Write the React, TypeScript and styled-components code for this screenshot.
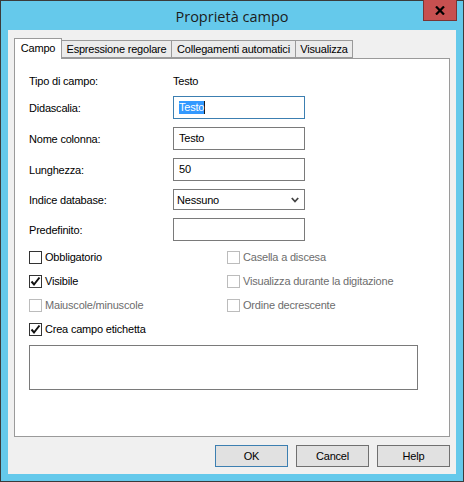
import React from 'react';
import styled, { createGlobalStyle } from 'styled-components';

const GlobalStyle = createGlobalStyle`
  html, body {
    margin: 0;
    padding: 0;
    background: #ffffff;
  }
  * {
    box-sizing: border-box;
  }
`;

const Window = styled.div`
  width: 464px;
  height: 482px;
  display: flex;
  flex-direction: column;
  background: #65c9eb;
  border: 1px solid #3b3b3b;
  padding: 0 7px 7px 7px;
  font-family: 'Liberation Sans', Arial, sans-serif;
  font-size: 11px;
  letter-spacing: -0.2px;
  color: #000;
  position: relative;
`;

const TitleBar = styled.div`
  height: 29px;
  display: flex;
  align-items: center;
  justify-content: center;
`;

const Title = styled.div`
  font-family: 'Open Sans', 'Noto Sans', sans-serif;
  font-size: 14.5px;
  letter-spacing: 0;
  color: #1c1c1c;
  margin-top: 1px;
`;

const CloseButton = styled.div`
  position: absolute;
  top: -1px;
  right: 6px;
  width: 34px;
  height: 21px;
  background: #c75050;
  border: 1px solid #7a3434;
  border-top: none;
  display: flex;
  align-items: center;
  justify-content: center;
`;

const Client = styled.div`
  flex: 1;
  background: #f0f0f0;
  padding: 8px 5px 0 6px;
  display: flex;
  flex-direction: column;
`;

const TabStrip = styled.div`
  display: flex;
  align-items: flex-end;
  height: 20px;
  position: relative;
  z-index: 1;
`;

const Tab = styled.div<{ $active?: boolean; $w: number }>`
  width: ${(p) => p.$w}px;
  height: ${(p) => (p.$active ? 21 : 18)}px;
  margin-bottom: ${(p) => (p.$active ? -1 : 0)}px;
  margin-left: ${(p) => (p.$active ? 0 : -1)}px;
  border: 1px solid #9a9a9a;
  border-bottom: ${(p) => (p.$active ? 'none' : '1px solid #9a9a9a')};
  background: ${(p) => (p.$active ? '#ffffff' : '#ebebeb')};
  display: flex;
  align-items: center;
  justify-content: center;
  padding-bottom: ${(p) => (p.$active ? 2 : 0)}px;
  white-space: nowrap;
  &:first-child {
    margin-left: 0;
  }
`;

const Panel = styled.div`
  width: 436px;
  height: 379px;
  background: #ffffff;
  border: 1px solid #9a9a9a;
  padding: 15px 14px 0 14px;
  display: flex;
  flex-direction: column;
  gap: 8px;
`;

const FieldRow = styled.div<{ $h: number }>`
  display: grid;
  grid-template-columns: 144px 132px;
  align-items: center;
  height: ${(p) => p.$h}px;
`;

const Label = styled.div`
  white-space: nowrap;
`;

const TextBox = styled.div<{ $focused?: boolean }>`
  height: 23px;
  border: 1px solid ${(p) => (p.$focused ? '#3c7fb1' : '#7a7a7a')};
  background: #fff;
  display: flex;
  align-items: center;
  padding: 0 0 1px 5px;
`;

const Selected = styled.span`
  background: #3399ff;
  color: #fff;
  border-right: 1px solid #1a1a1a;
  line-height: 13px;
`;

const SelectBox = styled.div`
  height: 21px;
  border: 1px solid #7a7a7a;
  background: #fff;
  display: flex;
  align-items: center;
  justify-content: space-between;
  padding: 0 5px 0 3px;
`;

const CheckGrid = styled.div`
  display: grid;
  grid-template-columns: 198px 1fr;
  grid-auto-rows: 16px;
  row-gap: 8px;
`;

const CheckItem = styled.div<{ $disabled?: boolean }>`
  display: flex;
  align-items: center;
  gap: 3px;
  color: ${(p) => (p.$disabled ? '#6d6d6d' : '#000')};
  white-space: nowrap;
`;

const Box = styled.div<{ $disabled?: boolean }>`
  width: 13px;
  height: 13px;
  border: 1px solid ${(p) => (p.$disabled ? '#bcbcbc' : '#333333')};
  background: #fff;
  display: flex;
  align-items: center;
  justify-content: center;
`;

const NoteBox = styled.div`
  width: 389px;
  height: 45px;
  border: 1px solid #7a7a7a;
  background: #fff;
`;

const ButtonRow = styled.div`
  display: flex;
  justify-content: flex-end;
  gap: 8px;
  margin-top: 8px;
  padding-right: 1px;
`;

const Button = styled.div<{ $default?: boolean }>`
  width: 73px;
  height: 22px;
  background: #e1e1e1;
  border: 1px solid ${(p) => (p.$default ? '#3c7fb1' : '#707070')};
  display: flex;
  align-items: center;
  justify-content: center;
`;

const Tick = () => (
  <svg width="11" height="11" viewBox="0 0 11 11">
    <path d="M1.5 5.5 L4 8.5 L9.5 1.5" fill="none" stroke="#111" strokeWidth="2" />
  </svg>
);

const Chevron = () => (
  <svg width="8" height="6" viewBox="0 0 8 6">
    <path d="M0.8 1 L4 4.5 L7.2 1" fill="none" stroke="#444" strokeWidth="1.8" />
  </svg>
);

const CloseGlyph = () => (
  <svg width="10" height="9" viewBox="0 0 10 9">
    <path d="M1 0.5 L9 8.5 M9 0.5 L1 8.5" stroke="#000" strokeWidth="2.2" />
  </svg>
);

const Check: React.FC<{ label: string; checked?: boolean; disabled?: boolean }> = ({
  label,
  checked,
  disabled,
}) => (
  <CheckItem $disabled={disabled}>
    <Box $disabled={disabled}>{checked && <Tick />}</Box>
    <span>{label}</span>
  </CheckItem>
);

const tabs = [
  { name: 'Campo', w: 48 },
  { name: 'Espressione regolare', w: 111 },
  { name: 'Collegamenti automatici', w: 125 },
  { name: 'Visualizza', w: 58 },
];

export default function App() {
  return (
    <>
      <GlobalStyle />
      <Window>
        <TitleBar>
          <Title>Proprietà campo</Title>
        </TitleBar>
        <CloseButton>
          <CloseGlyph />
        </CloseButton>
        <Client>
          <TabStrip>
            {tabs.map((t, i) => (
              <Tab key={t.name} $active={i === 0} $w={t.w}>
                {t.name}
              </Tab>
            ))}
          </TabStrip>
          <Panel>
            <FieldRow $h={14}>
              <Label>Tipo di campo:</Label>
              <Label>Testo</Label>
            </FieldRow>
            <FieldRow $h={23}>
              <Label>Didascalia:</Label>
              <TextBox $focused>
                <Selected>Testo</Selected>
              </TextBox>
            </FieldRow>
            <FieldRow $h={23}>
              <Label>Nome colonna:</Label>
              <TextBox>Testo</TextBox>
            </FieldRow>
            <FieldRow $h={23}>
              <Label>Lunghezza:</Label>
              <TextBox>50</TextBox>
            </FieldRow>
            <FieldRow $h={21}>
              <Label>Indice database:</Label>
              <SelectBox>
                <span>Nessuno</span>
                <Chevron />
              </SelectBox>
            </FieldRow>
            <FieldRow $h={23}>
              <Label>Predefinito:</Label>
              <TextBox />
            </FieldRow>
            <CheckGrid>
              <Check label="Obbligatorio" />
              <Check label="Casella a discesa" disabled />
              <Check label="Visibile" checked />
              <Check label="Visualizza durante la digitazione" disabled />
              <Check label="Maiuscole/minuscole" disabled />
              <Check label="Ordine decrescente" disabled />
              <Check label="Crea campo etichetta" checked />
            </CheckGrid>
            <NoteBox />
          </Panel>
          <ButtonRow>
            <Button $default>OK</Button>
            <Button>Cancel</Button>
            <Button>Help</Button>
          </ButtonRow>
        </Client>
      </Window>
    </>
  );
}
